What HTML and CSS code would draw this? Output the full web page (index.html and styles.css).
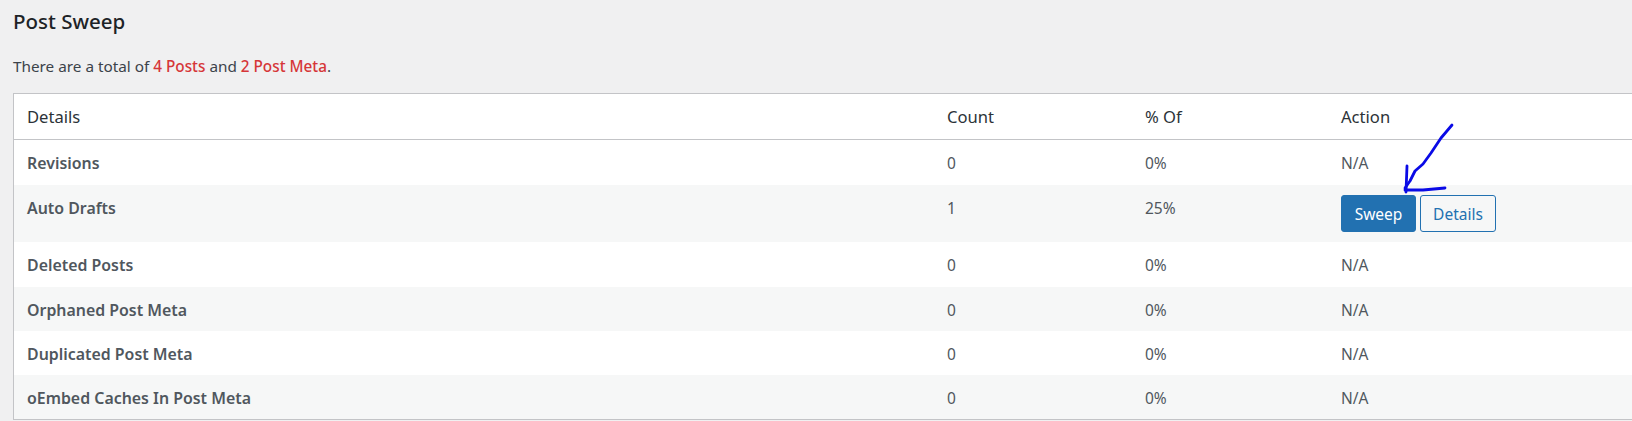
FILE: index.html
```html
<!DOCTYPE html>
<html lang="en">
  <head>
    <meta charset="UTF-8" />
    <title>Post Sweep</title>
    <link rel="stylesheet" href="styles.css">
  </head>
  <body>
    <div class="wrap">
      <h2>Post Sweep</h2>
      <p class="summary">There are a total of <span class="total">4 Posts</span> and <span class="total">2 Post Meta</span>.</p>
      <table class="sweep-table">
        <thead>
          <tr>
            <th class="col-details">Details</th>
            <th class="col-count">Count</th>
            <th class="col-percent">% Of</th>
            <th class="col-action">Action</th>
          </tr>
        </thead>
        <tbody>
          <tr class="wide">
            <td><strong>Revisions</strong></td>
            <td>0</td>
            <td>0%</td>
            <td>N/A</td>
          </tr>
          <tr class="alt tall">
            <td><strong>Auto Drafts</strong></td>
            <td>1</td>
            <td>25%</td>
            <td>
              <div class="actions">
                <button class="button primary">Sweep</button>
                <button class="button">Details</button>
              </div>
            </td>
          </tr>
          <tr class="wide">
            <td><strong>Deleted Posts</strong></td>
            <td>0</td>
            <td>0%</td>
            <td>N/A</td>
          </tr>
          <tr class="alt">
            <td><strong>Orphaned Post Meta</strong></td>
            <td>0</td>
            <td>0%</td>
            <td>N/A</td>
          </tr>
          <tr>
            <td><strong>Duplicated Post Meta</strong></td>
            <td>0</td>
            <td>0%</td>
            <td>N/A</td>
          </tr>
          <tr class="alt">
            <td><strong>oEmbed Caches In Post Meta</strong></td>
            <td>0</td>
            <td>0%</td>
            <td>N/A</td>
          </tr>
        </tbody>
      </table>
    </div>

    <svg class="scribble" width="80" height="80" viewBox="0 0 80 80" fill="none" stroke="#0a0ae6" stroke-width="2.8" stroke-linecap="round" stroke-linejoin="round">
      <path d="M69 3 L58 16 L48 31 L40 42 L32 49 L27 59 L22 66" />
      <path d="M24 44 L23 70" />
      <path d="M22 68 L40 68 L62 66" />
    </svg>
  </body>
</html>
```

FILE: styles.css
```css
body {
  margin: 0;
  height: 421px;
  overflow: hidden;
  background: #f0f0f1;
  font-family: "Noto Sans", sans-serif;
  font-size: 15.5px;
  color: #3c434a;
  position: relative;
}

.wrap {
  padding: 0 0 0 13px;
}

h2 {
  margin: 0;
  padding-top: 7px;
  font-size: 20.5px;
  line-height: 28px;
  font-weight: 500;
  color: #1d2327;
}

.summary {
  margin: 0;
  padding-top: 20px;
  line-height: 22px;
  height: 38px;
  font-size: 15.3px;
}

.total {
  color: #d63638;
  font-weight: 500;
}

.sweep-table {
  width: 1640px;
  table-layout: fixed;
  border-collapse: separate;
  border-spacing: 0;
  background: #fff;
  border: 1px solid #c3c4c7;
  border-right: none;
}

.col-details {
  width: 907px;
}

.col-count {
  width: 185px;
}

.col-percent {
  width: 183px;
}

th {
  height: 45px;
  padding: 0 0 0 13px;
  text-align: left;
  font-weight: 400;
  font-size: 16.6px;
  color: #2c3338;
  border-bottom: 1px solid #c3c4c7;
}

td {
  height: 43px;
  padding: 1px 0 0 13px;
  color: #50575e;
  vertical-align: middle;
}

.wide td {
  height: 44px;
}

td strong {
  font-size: 15.9px;
  font-weight: 600;
}

.alt td {
  background: #f6f7f7;
}

.tall td {
  height: 57px;
  vertical-align: top;
  padding-top: 11px;
  line-height: 24px;
  box-sizing: border-box;
}

.actions {
  display: flex;
  gap: 4px;
  margin-top: -1px;
}

.button {
  width: 76px;
  height: 37px;
  padding: 0;
  border: 1px solid #2271b1;
  border-radius: 3px;
  background: #f6f7f7;
  color: #2271b1;
  font-family: inherit;
  font-size: 15.5px;
}

.button.primary {
  width: 75px;
  background: #2271b1;
  color: #fff;
}

.scribble {
  position: absolute;
  left: 1383px;
  top: 122px;
}
```
